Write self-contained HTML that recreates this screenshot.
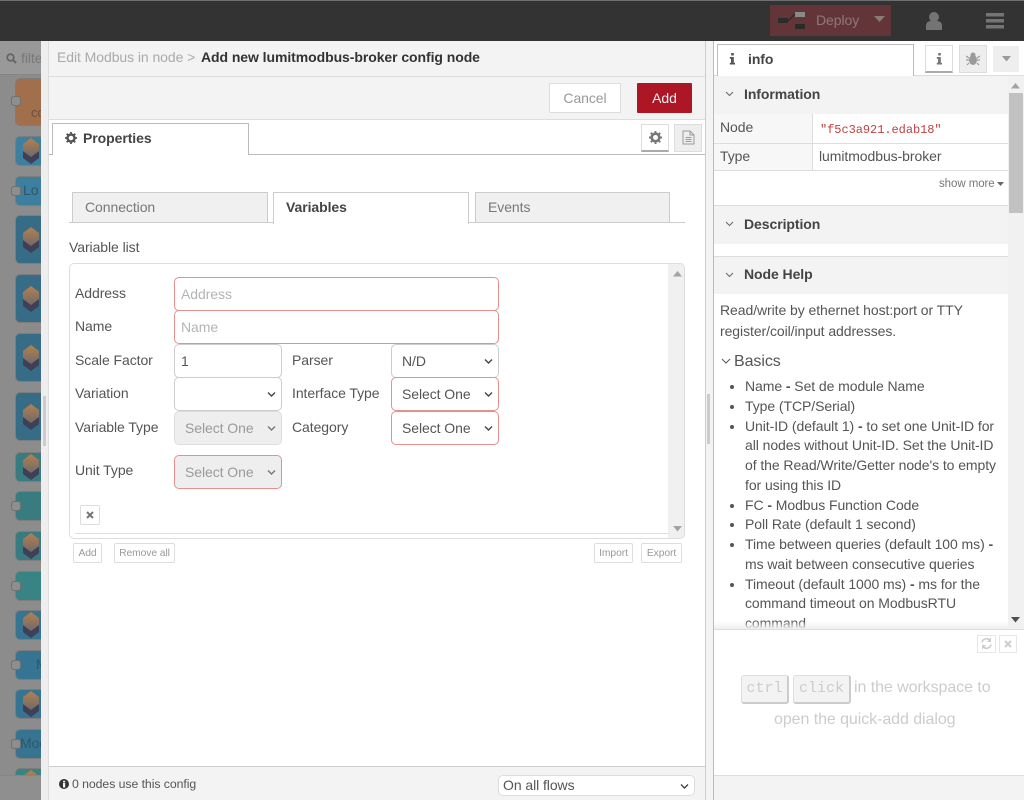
<!DOCTYPE html>
<html><head><meta charset="utf-8">
<style>
*{box-sizing:border-box}
html,body{margin:0;padding:0;width:1024px;height:800px;overflow:hidden;background:#fff;font-family:"Liberation Sans",sans-serif;font-size:14px;color:#555;letter-spacing:-.07px}
.a{position:absolute}
.t{position:absolute;white-space:nowrap;line-height:20px}
.n{position:absolute;left:15px;width:30px;border-radius:5px;background:#3d7089;border:1px solid #7d7d7d}
.p{position:absolute;left:11px;width:10px;height:10px;border-radius:3px;background:#8e8e8e;border:1px solid #6f6f6f}
.ic{position:absolute;left:23px;width:16px;height:26px}
.in{position:absolute;height:34px;border:1px solid #ccc;border-radius:5px;background:#fff;padding:0 6px;line-height:32px;white-space:nowrap;color:#555}
.red{border-color:#e58f8f}
.ph{color:#b4b4b4}
.dis{background:#eee;color:#9a9a9a}
.sel{padding-left:10px}
.chev{position:absolute;right:4px;top:11px;width:11px;height:10px}
.btn{position:absolute;height:20px;border:1px solid #ddd;border-radius:2px;background:#fff;color:#999;font-size:10.3px;line-height:19px;text-align:center}
.sec{position:absolute;left:714px;width:294px;background:#f3f3f3;font-weight:bold;color:#444}
li{margin:0;padding:0}
li b{font-weight:bold}
</style></head><body>

<svg width="0" height="0" style="position:absolute"><defs><linearGradient id="g" x1="0" y1="0" x2="0" y2="1"><stop offset="0" stop-color="#b5804f"/><stop offset="1" stop-color="#6f6a6a"/></linearGradient></defs></svg>

<!-- header -->
<div class="a" style="left:0;top:0;width:1024px;height:41px;background:#333;border-top:1px solid #6f6f6f"></div>
<div class="a" style="left:770px;top:5px;width:121px;height:31px;background:#643538"></div>
<svg class="a" style="left:777px;top:11px" width="30" height="20"><rect x="1" y="7" width="10" height="5" fill="#2b2b2b"/><rect x="18" y="1" width="10" height="5" fill="#8a8a8a"/><rect x="18" y="13" width="10" height="5" fill="#2b2b2b"/><path d="M11 10L18 3" stroke="#2b2b2b" stroke-width="1.5"/></svg>
<div class="t" style="left:816px;top:10px;color:#8a7a7a">Deploy</div>
<svg class="a" style="left:874px;top:16px" width="12" height="8"><path d="M0 0H11L5.500 6Z" fill="#8a7a7a"/></svg>
<svg class="a" style="left:925px;top:11px" width="18" height="20"><circle cx="9" cy="6" r="5" fill="#747474"/><path d="M1 19V15Q1 10 6 10H12Q17 10 17 15V19Z" fill="#747474"/></svg>
<svg class="a" style="left:986px;top:13px" width="18" height="16"><rect y="0" width="18" height="3.500" fill="#747474"/><rect y="6" width="18" height="3.500" fill="#747474"/><rect y="12" width="18" height="3.500" fill="#747474"/></svg>

<!-- palette -->
<div class="a" style="left:0;top:41px;width:41px;height:759px;background:#8c8c8c"></div>
<div class="a" style="left:0;top:41px;width:41px;height:34px;background:#999;border-bottom:1px solid #858585"></div>
<svg class="a" style="left:6px;top:53px" width="11" height="11"><circle cx="4.500" cy="4.500" r="3.300" fill="none" stroke="#666" stroke-width="1.800"/><path d="M7 7L10 10" stroke="#666" stroke-width="2"/></svg>
<div class="t" style="left:21px;top:48px;color:#787878;width:20px;overflow:hidden">filter</div>

<div id="nodes" class="a" style="left:0;top:0;width:41px;height:800px;overflow:hidden">
<div class="n" style="top:78px;height:48px;background:#a26f4c"></div><div class="p" style="top:96px"></div><div class="t" style="left:31px;top:103px;color:#6a5140;font-size:13px">co</div>
<div class="n" style="top:136px;height:30px;background:#3c7f9e"></div>
<svg class="ic" style="top:138px" viewBox="0 0 16 26"><path d="M0 13L8 18L16 13V20L8 26L0 20Z" fill="#3f3f58"/><path d="M8 0L16 6V13L8 19L0 13V6Z" fill="url(#g)"/></svg>
<div class="n" style="top:176px;height:30px;background:#3c7f9e"></div><div class="p" style="top:186px"></div><div class="t" style="left:23px;top:180px;color:#2f5768">Lo</div>
<div class="n" style="top:215px;height:49px;background:#376c86"></div>
<svg class="ic" style="top:227px" viewBox="0 0 16 26"><path d="M0 13L8 18L16 13V20L8 26L0 20Z" fill="#3f3f58"/><path d="M8 0L16 6V13L8 19L0 13V6Z" fill="url(#g)"/></svg>
<div class="n" style="top:274px;height:49px;background:#376c86"></div>
<svg class="ic" style="top:286px" viewBox="0 0 16 26"><path d="M0 13L8 18L16 13V20L8 26L0 20Z" fill="#3f3f58"/><path d="M8 0L16 6V13L8 19L0 13V6Z" fill="url(#g)"/></svg>
<div class="n" style="top:333px;height:49px;background:#376c86"></div>
<svg class="ic" style="top:345px" viewBox="0 0 16 26"><path d="M0 13L8 18L16 13V20L8 26L0 20Z" fill="#3f3f58"/><path d="M8 0L16 6V13L8 19L0 13V6Z" fill="url(#g)"/></svg>
<div class="n" style="top:392px;height:49px;background:#376c86"></div>
<svg class="ic" style="top:404px" viewBox="0 0 16 26"><path d="M0 13L8 18L16 13V20L8 26L0 20Z" fill="#3f3f58"/><path d="M8 0L16 6V13L8 19L0 13V6Z" fill="url(#g)"/></svg>
<div class="n" style="top:452px;height:30px;background:#387c80"></div>
<svg class="ic" style="top:454px" viewBox="0 0 16 26"><path d="M0 13L8 18L16 13V20L8 26L0 20Z" fill="#3f3f58"/><path d="M8 0L16 6V13L8 19L0 13V6Z" fill="url(#g)"/></svg>
<div class="n" style="top:491px;height:30px;background:#387c80"></div><div class="p" style="top:501px"></div>
<div class="n" style="top:531px;height:30px;background:#387c80"></div>
<svg class="ic" style="top:533px" viewBox="0 0 16 26"><path d="M0 13L8 18L16 13V20L8 26L0 20Z" fill="#3f3f58"/><path d="M8 0L16 6V13L8 19L0 13V6Z" fill="url(#g)"/></svg>
<div class="n" style="top:571px;height:30px;background:#388384"></div><div class="p" style="top:581px"></div>
<div class="n" style="top:610px;height:30px;background:#377491"></div>
<svg class="ic" style="top:612px" viewBox="0 0 16 26"><path d="M0 13L8 18L16 13V20L8 26L0 20Z" fill="#3f3f58"/><path d="M8 0L16 6V13L8 19L0 13V6Z" fill="url(#g)"/></svg>
<div class="n" style="top:650px;height:30px;background:#377491"></div><div class="p" style="top:660px"></div><div class="t" style="left:36px;top:654px;color:#2f5768">M</div>
<div class="n" style="top:689px;height:30px;background:#377491"></div>
<svg class="ic" style="top:691px" viewBox="0 0 16 26"><path d="M0 13L8 18L16 13V20L8 26L0 20Z" fill="#3f3f58"/><path d="M8 0L16 6V13L8 19L0 13V6Z" fill="url(#g)"/></svg>
<div class="n" style="top:729px;height:30px;background:#377491"></div><div class="p" style="top:739px"></div><div class="t" style="left:20px;top:733px;color:#2f5768">Mod</div>
<div class="n" style="top:768px;height:30px;background:#388384"></div>
<svg class="ic" style="top:770px" viewBox="0 0 16 26"><path d="M0 13L8 18L16 13V20L8 26L0 20Z" fill="#3f3f58"/><path d="M8 0L16 6V13L8 19L0 13V6Z" fill="url(#g)"/></svg>
<div class="a" style="left:0;top:775px;width:41px;height:25px;background:#8f8f8f;border-top:1px solid #858585"></div>
</div>

<!-- dialog -->
<div class="a" style="left:41px;top:41px;width:8px;height:759px;background:#eee"></div>
<div class="a" style="left:48px;top:41px;width:658px;height:759px;background:#fff;border-left:1px solid #ddd;border-right:1px solid #ccc"></div>
<div class="a" style="left:49px;top:41px;width:656px;height:36px;background:#f3f3f3;border-bottom:1px solid #ddd"></div>
<div class="t" style="left:57px;top:47px;color:#aaa">Edit Modbus in node &gt;</div>
<div class="t" style="left:201px;top:47px;font-weight:bold;color:#333">Add new lumitmodbus-broker config node</div>
<div class="a" style="left:49px;top:77px;width:656px;height:43px;background:#f3f3f3;border-bottom:1px solid #ddd"></div>
<div class="a" style="left:549px;top:83px;width:72px;height:30px;background:#fff;border:1px solid #ddd;border-radius:1px;color:#999;text-align:center;line-height:28px">Cancel</div>
<div class="a" style="left:637px;top:83px;width:55px;height:30px;background:#ad1625;color:#eee;text-align:center;line-height:30px;border-radius:1px">Add</div>

<!-- prop tabs -->
<div class="a" style="left:49px;top:154px;width:656px;height:1px;background:#bbb"></div>
<div class="a" style="left:52px;top:123px;width:197px;height:32px;background:#fff;border:1px solid #bbb;border-bottom:none"></div>
<svg class="a" style="left:65px;top:132px" width="12" height="12" viewBox="0 0 12 12"><circle cx="6" cy="6" r="3.500" fill="none" stroke="#555" stroke-width="2.400"/><path d="M6 0V2M6 10V12M0 6H2M10 6H12M1.700 1.700L3 3M9 9L10.300 10.300M1.700 10.300L3 9M9 3L10.300 1.700" stroke="#555" stroke-width="1.800"/></svg>
<div class="t" style="left:83px;top:128px;font-weight:bold;color:#444">Properties</div>
<div class="a" style="left:641px;top:124px;width:28px;height:28px;background:#fff;border:1px solid #ddd;border-bottom:2px solid #aaa"></div>
<svg class="a" style="left:649px;top:131px" width="13" height="13" viewBox="0 0 12 12"><circle cx="6" cy="6" r="3.500" fill="none" stroke="#777" stroke-width="2.400"/><path d="M6 0V2M6 10V12M0 6H2M10 6H12M1.700 1.700L3 3M9 9L10.300 10.300M1.700 10.300L3 9M9 3L10.300 1.700" stroke="#777" stroke-width="1.800"/></svg>
<div class="a" style="left:674px;top:124px;width:28px;height:28px;background:#eee;border:1px solid #ddd"></div>
<svg class="a" style="left:682px;top:130px" width="13" height="15"><path d="M1 1H8L12 5V14H1Z M8 1V5H12 M3.500 7.500H9.500M3.500 9.500H9.500M3.500 11.500H9.500" fill="none" stroke="#999" stroke-width="1"/></svg>

<!-- inner tabs -->
<div class="a" style="left:69px;top:222px;width:616px;height:1px;background:#ccc"></div>
<div class="a" style="left:72px;top:192px;width:196px;height:31px;background:#f0f0f0;border:1px solid #ccc"></div>
<div class="t" style="left:85px;top:197px;color:#777">Connection</div>
<div class="a" style="left:273px;top:192px;width:196px;height:32px;background:#fff;border:1px solid #ccc;border-bottom:none"></div>
<div class="t" style="left:286px;top:197px;font-weight:bold;color:#444">Variables</div>
<div class="a" style="left:475px;top:192px;width:195px;height:31px;background:#f0f0f0;border:1px solid #ccc"></div>
<div class="t" style="left:488px;top:197px;color:#777">Events</div>

<div class="t" style="left:69px;top:237px">Variable list</div>

<!-- list -->
<div class="a" style="left:69px;top:263px;width:616px;height:276px;background:#fff;border:1px solid #ddd;border-radius:5px;overflow:hidden">
  <div class="a" style="right:0;top:0;width:16px;height:274px;background:#f0f0f0"></div>
  <svg class="a" style="left:603px;top:7px" width="9" height="6"><path d="M0 5.500L4.500 0L9 5.500Z" fill="#a3a3a3"/></svg>
  <svg class="a" style="left:603px;top:262px" width="9" height="6"><path d="M0 0L4.500 5.500L9 0Z" fill="#a3a3a3"/></svg>
  <div class="a" style="left:5px;top:269px;width:594px;height:1px;background:#ddd"></div>
</div>

<div class="t" style="left:75px;top:283px">Address</div>
<div class="in red ph" style="left:174px;top:277px;width:325px">Address</div>
<div class="t" style="left:75px;top:316px">Name</div>
<div class="in red ph" style="left:174px;top:310px;width:325px">Name</div>
<div class="t" style="left:75px;top:350px">Scale Factor</div>
<div class="in" style="left:174px;top:344px;width:108px">1</div>
<div class="t" style="left:292px;top:350px">Parser</div>
<div class="in sel" style="left:391px;top:344px;width:108px">N/D<svg class="chev" viewBox="0 0 11 10"><path d="M2 3.500L5.500 7L9 3.500" fill="none" stroke="#444" stroke-width="1.400"/></svg></div>
<div class="t" style="left:75px;top:383px">Variation</div>
<div class="in" style="left:174px;top:377px;width:108px"><svg class="chev" viewBox="0 0 11 10"><path d="M2 3.500L5.500 7L9 3.500" fill="none" stroke="#444" stroke-width="1.400"/></svg></div>
<div class="t" style="left:292px;top:383px">Interface Type</div>
<div class="in red sel" style="left:391px;top:377px;width:108px">Select One<svg class="chev" viewBox="0 0 11 10"><path d="M2 3.500L5.500 7L9 3.500" fill="none" stroke="#444" stroke-width="1.400"/></svg></div>
<div class="t" style="left:75px;top:417px">Variable Type</div>
<div class="in dis sel" style="left:174px;top:411px;width:108px;border-color:#ddd">Select One<svg class="chev" viewBox="0 0 11 10"><path d="M2 3.500L5.500 7L9 3.500" fill="none" stroke="#777" stroke-width="1.400"/></svg></div>
<div class="t" style="left:292px;top:417px">Category</div>
<div class="in red sel" style="left:391px;top:411px;width:108px">Select One<svg class="chev" viewBox="0 0 11 10"><path d="M2 3.500L5.500 7L9 3.500" fill="none" stroke="#444" stroke-width="1.400"/></svg></div>
<div class="t" style="left:75px;top:460px">Unit Type</div>
<div class="in red dis sel" style="left:174px;top:455px;width:108px">Select One<svg class="chev" viewBox="0 0 11 10"><path d="M2 3.500L5.500 7L9 3.500" fill="none" stroke="#777" stroke-width="1.400"/></svg></div>

<div class="a" style="left:80px;top:505px;width:20px;height:20px;background:#fff;border:1px solid #ddd;border-radius:2px"></div>
<svg class="a" style="left:86px;top:511px" width="8" height="8"><path d="M1 1L7 7M7 1L1 7" stroke="#777" stroke-width="2"/></svg>

<div class="btn" style="left:73px;top:543px;width:29px">Add</div>
<div class="btn" style="left:114px;top:543px;width:61px">Remove all</div>
<div class="btn" style="left:594px;top:543px;width:39px">Import</div>
<div class="btn" style="left:641px;top:543px;width:41px">Export</div>

<!-- dialog footer -->
<div class="a" style="left:49px;top:766px;width:656px;height:34px;background:#f3f3f3;border-top:1px solid #ccc"></div>
<svg class="a" style="left:59px;top:779px" width="10" height="10"><circle cx="5" cy="5" r="5" fill="#333"/><rect x="4" y="4" width="2.200" height="4.500" fill="#f3f3f3"/><rect x="4" y="1.800" width="2.200" height="1.600" fill="#f3f3f3"/></svg>
<div class="t" style="left:72px;top:774px;font-size:12.300px">0 nodes use this config</div>
<div class="in" style="left:498px;top:775px;width:197px;height:21px;line-height:19px;padding-left:4px;border-color:#ddd">On all flows<svg class="chev" style="top:5px" viewBox="0 0 11 10"><path d="M2 3.500L5.500 7L9 3.500" fill="none" stroke="#444" stroke-width="1.400"/></svg></div>

<!-- separator -->
<div class="a" style="left:706px;top:41px;width:8px;height:759px;background:#f3f3f3;border-right:1px solid #bbb"></div>
<div class="a" style="left:707px;top:394px;width:3px;height:50px;background:#ccc"></div>
<div class="a" style="left:43px;top:396px;width:3px;height:50px;background:#ccc"></div>

<!-- sidebar tabs -->
<div class="a" style="left:714px;top:41px;width:310px;height:35px;background:#fff;border-bottom:1px solid #ddd"></div>
<div class="a" style="left:717px;top:44px;width:197px;height:32px;background:#fff;border:1px solid #bbb;border-bottom:none"></div>
<svg class="a" style="left:729px;top:53px" width="7" height="12"><path d="M2.200 0H4.800V2.500H2.200ZM.8 4H4.800V9.700H6V11.500H.8V9.700H2V5.800H.8Z" fill="#555"/></svg>
<div class="t" style="left:748px;top:49px;font-weight:bold;color:#444">info</div>
<div class="a" style="left:925px;top:45px;width:28px;height:28px;background:#fff;border:1px solid #ddd;border-bottom:2px solid #aaa"></div>
<svg class="a" style="left:936px;top:53px" width="7" height="12"><path d="M2.200 0H4.800V2.500H2.200ZM.8 4H4.800V9.700H6V11.500H.8V9.700H2V5.800H.8Z" fill="#777"/></svg>
<div class="a" style="left:959px;top:45px;width:28px;height:28px;background:#eee;border:1px solid #ddd"></div>
<svg class="a" style="left:966px;top:52px" width="14" height="14"><ellipse cx="7" cy="8" rx="4" ry="5" fill="#9a9a9a"/><circle cx="7" cy="3" r="2.500" fill="#9a9a9a"/><path d="M0 4L3 6M14 4L11 6M0 8H3M14 8H11M1 13L3 11M13 13L11 11" stroke="#9a9a9a" stroke-width="1.200"/></svg>
<div class="a" style="left:993px;top:46px;width:26px;height:26px;background:#eee"></div>
<svg class="a" style="left:1002px;top:56px" width="9" height="6"><path d="M0 0H9L4.500 5.500Z" fill="#999"/></svg>

<!-- sidebar content -->
<div class="a" style="left:714px;top:76px;width:310px;height:553px;background:#fff;overflow:hidden"></div>
<div class="sec" style="top:76px;height:38px"></div>
<svg class="a" style="left:725px;top:91px" width="9" height="6"><path d="M1 1L4.500 4.500L8 1" fill="none" stroke="#666" stroke-width="1"/></svg>
<div class="t" style="left:744px;top:84px;font-weight:bold;color:#444">Information</div>

<div class="a" style="left:714px;top:114px;width:99px;height:57px;background:#f7f7f7"></div>
<div class="a" style="left:812px;top:114px;width:1px;height:57px;background:#ddd"></div>
<div class="a" style="left:714px;top:143px;width:294px;height:1px;background:#ddd"></div>
<div class="a" style="left:714px;top:170px;width:294px;height:1px;background:#ddd"></div>
<div class="t" style="left:720px;top:117px">Node</div>
<div class="t" style="left:820px;top:120px;font-family:'Liberation Mono',monospace;font-size:12px;color:#c04040;letter-spacing:-.05px">"f5c3a921.edab18"</div>
<div class="t" style="left:720px;top:146px">Type</div>
<div class="t" style="left:819px;top:146px">lumitmodbus-broker</div>
<div class="t" style="left:939px;top:174px;font-size:11.500px;color:#777">show more</div>
<svg class="a" style="left:997px;top:182px" width="8" height="5"><path d="M0 0H7L3.500 4Z" fill="#666"/></svg>

<div class="a" style="left:714px;top:205px;width:294px;height:1px;background:#ddd"></div>
<div class="sec" style="top:206px;height:38px"></div>
<svg class="a" style="left:725px;top:221px" width="9" height="6"><path d="M1 1L4.500 4.500L8 1" fill="none" stroke="#666" stroke-width="1"/></svg>
<div class="t" style="left:744px;top:214px;font-weight:bold;color:#444">Description</div>

<div class="a" style="left:714px;top:256px;width:294px;height:1px;background:#ddd"></div>
<div class="sec" style="top:257px;height:37px"></div>
<svg class="a" style="left:725px;top:272px" width="9" height="6"><path d="M1 1L4.500 4.500L8 1" fill="none" stroke="#666" stroke-width="1"/></svg>
<div class="t" style="left:744px;top:264px;font-weight:bold;color:#444">Node Help</div>

<div class="t" style="left:720px;top:300px">Read/write by ethernet host:port or TTY</div>
<div class="t" style="left:720px;top:321px">register/coil/input addresses.</div>
<svg class="a" style="left:721px;top:358px" width="10" height="7"><path d="M1 1L5 5L9 1" fill="none" stroke="#555" stroke-width="1"/></svg>
<div class="t" style="left:734px;top:352px;font-size:16px">Basics</div>

<div class="a" style="left:714px;top:377px;width:294px;height:252px;overflow:hidden">
<ul style="margin:0;padding:0 0 0 31px;line-height:19.750px;width:288px;font-size:14px">
<li>Name <b>-</b> Set de module Name</li>
<li>Type (TCP/Serial)</li>
<li>Unit-ID (default 1) <b>-</b> to set one Unit-ID for all nodes without Unit-ID. Set the Unit-ID of the Read/Write/Getter node's to empty for using this ID</li>
<li>FC <b>-</b> Modbus Function Code</li>
<li>Poll Rate (default 1 second)</li>
<li>Time between queries (default 100 ms) <b>-</b> ms wait between consecutive queries</li>
<li>Timeout (default 1000 ms) <b>-</b> ms for the command timeout on ModbusRTU command</li>
</ul>
</div>
<div class="a" style="left:714px;top:621px;width:294px;height:8px;background:linear-gradient(rgba(238,238,238,0),#eee)"></div>

<!-- scrollbar -->
<div class="a" style="left:1008px;top:76px;width:16px;height:553px;background:#f1f1f1"></div>
<svg class="a" style="left:1011px;top:83px" width="9" height="6"><path d="M0 5.500L4.500 0L9 5.500Z" fill="#a3a3a3"/></svg>
<div class="a" style="left:1009px;top:93px;width:14px;height:120px;background:#c1c1c1"></div>
<svg class="a" style="left:1011px;top:617px" width="9" height="6"><path d="M0 0L4.500 5.500L9 0Z" fill="#505050"/></svg>

<!-- tips -->
<div class="a" style="left:714px;top:629px;width:310px;height:147px;background:#fff;border-top:1px solid #ddd"></div>
<div class="a" style="left:977px;top:635px;width:19px;height:18px;border:1px solid #e6e6e6;background:#fff"></div>
<svg class="a" style="left:980px;top:637px" width="13" height="13" viewBox="0 0 13 13"><path d="M2 5.500A4.500 4.500 0 0 1 10 3.500M11 7.500A4.500 4.500 0 0 1 3 9.500" fill="none" stroke="#ccc" stroke-width="1.600"/><path d="M11 0.500V5H7ZM2 12.500V8H6Z" fill="#ccc"/></svg>
<div class="a" style="left:999px;top:635px;width:18px;height:18px;border:1px solid #e6e6e6;background:#fff"></div>
<svg class="a" style="left:1004px;top:640px" width="8" height="8"><path d="M1 1L7 7M7 1L1 7" stroke="#ccc" stroke-width="2"/></svg>

<div class="a" style="left:741px;top:675px;width:48px;height:29px;background:#f3f3f3;border:1px solid #ddd;border-right:2px solid #ccc;border-bottom:2px solid #ccc;border-radius:3px;font-family:'Liberation Mono',monospace;color:#ccc;text-align:center;line-height:26px;font-size:15px;letter-spacing:0">ctrl</div>
<div class="a" style="left:793px;top:675px;width:58px;height:29px;background:#f3f3f3;border:1px solid #ddd;border-right:2px solid #ccc;border-bottom:2px solid #ccc;border-radius:3px;font-family:'Liberation Mono',monospace;color:#ccc;text-align:center;line-height:26px;font-size:15px;letter-spacing:0">click</div>
<div class="t" style="left:854px;top:678px;font-size:16px;color:#ccc">in the workspace to</div>
<div class="t" style="left:774px;top:710px;font-size:16px;color:#ccc">open the quick-add dialog</div>

<div class="a" style="left:714px;top:775px;width:310px;height:25px;background:#f3f3f3;border-top:1px solid #ddd"></div>
</body></html>
